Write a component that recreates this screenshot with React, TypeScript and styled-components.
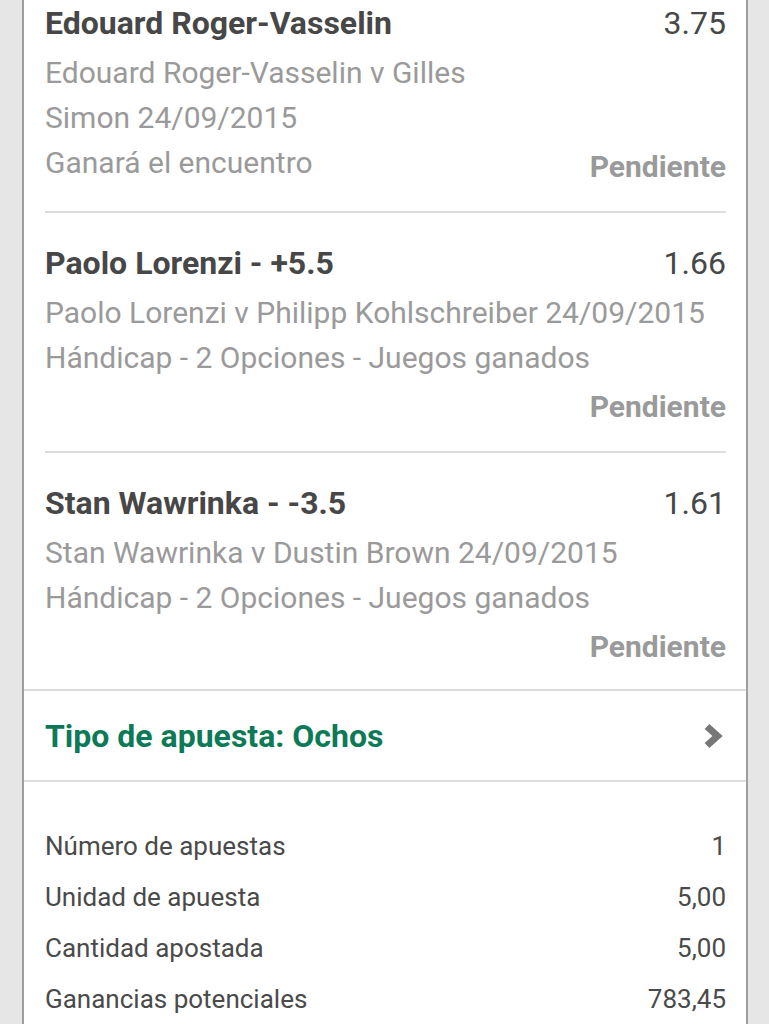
import React from 'react';
import styled, { createGlobalStyle } from 'styled-components';

const GlobalStyle = createGlobalStyle`
  html, body {
    margin: 0;
    padding: 0;
    background: #e6e6e6;
    font-family: Roboto, "Noto Sans", Arial, sans-serif;
  }
  #root {
    height: 1024px;
    overflow: hidden;
  }
`;

const Card = styled.div`
  margin: -27px 0 0 22px;
  width: 722px;
  background: #ffffff;
  border-left: 2px solid #9e9e9e;
  border-right: 2px solid #9e9e9e;
`;

const Selections = styled.div`
  padding: 0 20px 0 21px;
`;

const Selection = styled.div<{ last?: boolean }>`
  padding: 27px 0 ${p => (p.last ? '24px' : '26px')};
  border-bottom: ${p => (p.last ? 'none' : '2px solid #dcdcdc')};
`;

const TitleRow = styled.div`
  display: flex;
  justify-content: space-between;
  align-items: center;
  height: 45px;
  margin-bottom: 5px;
`;

const Title = styled.div`
  font-size: 32px;
  font-weight: 700;
  color: #474747;
`;

const Odds = styled.div`
  font-size: 32px;
  font-weight: 400;
  color: #474747;
`;

const Meta = styled.div`
  font-size: 30px;
  line-height: 45px;
  color: #9a9a9a;
`;

const StatusRow = styled.div`
  display: flex;
  justify-content: space-between;
  align-items: flex-start;
  height: 45px;
`;

const Status = styled.span`
  font-size: 30px;
  font-weight: 700;
  color: #9a9a9a;
  line-height: 45px;
  padding-top: 4px;
`;

const TypeRow = styled.div`
  display: flex;
  align-items: center;
  justify-content: space-between;
  height: 89px;
  padding: 0 22px 0 21px;
  border-top: 2px solid #dcdcdc;
  border-bottom: 2px solid #dcdcdc;
`;

const TypeLabel = styled.div`
  font-size: 32px;
  font-weight: 700;
  color: #0c7a56;
`;

const Summary = styled.div`
  padding: 38px 20px 0 21px;
`;

const SummaryRow = styled.div`
  display: flex;
  justify-content: space-between;
  align-items: center;
  height: 51px;
  font-size: 26px;
  color: #4a4a4a;
`;

type Bet = {
  title: string;
  odds: string;
  lines: string[];
  inlineStatus?: boolean;
};

const bets: Bet[] = [
  {
    title: 'Edouard Roger-Vasselin',
    odds: '3.75',
    lines: ['Edouard Roger-Vasselin v Gilles', 'Simon 24/09/2015', 'Ganará el encuentro'],
    inlineStatus: true,
  },
  {
    title: 'Paolo Lorenzi - +5.5',
    odds: '1.66',
    lines: ['Paolo Lorenzi v Philipp Kohlschreiber 24/09/2015', 'Hándicap - 2 Opciones - Juegos ganados'],
  },
  {
    title: 'Stan Wawrinka - -3.5',
    odds: '1.61',
    lines: ['Stan Wawrinka v Dustin Brown 24/09/2015', 'Hándicap - 2 Opciones - Juegos ganados'],
  },
];

const summary = [
  ['Número de apuestas', '1'],
  ['Unidad de apuesta', '5,00'],
  ['Cantidad apostada', '5,00'],
  ['Ganancias potenciales', '783,45'],
];

const Chevron = () => (
  <svg width="22" height="26" viewBox="0 0 22 26">
    <path d="M5 3.5 L15.5 13 L5 22.5" fill="none" stroke="#777777" strokeWidth="7" strokeLinejoin="miter" />
  </svg>
);

export default function App() {
  return (
    <>
      <GlobalStyle />
      <Card>
        <Selections>
          {bets.map((b, i) => {
            const head = b.inlineStatus ? b.lines.slice(0, -1) : b.lines;
            const tail = b.inlineStatus ? b.lines[b.lines.length - 1] : '';
            return (
              <Selection key={b.title} last={i === bets.length - 1}>
                <TitleRow>
                  <Title>{b.title}</Title>
                  <Odds>{b.odds}</Odds>
                </TitleRow>
                {head.map(l => (
                  <Meta key={l}>{l}</Meta>
                ))}
                <StatusRow>
                  <Meta>{tail}</Meta>
                  <Status>Pendiente</Status>
                </StatusRow>
              </Selection>
            );
          })}
        </Selections>
        <TypeRow>
          <TypeLabel>Tipo de apuesta: Ochos</TypeLabel>
          <Chevron />
        </TypeRow>
        <Summary>
          {summary.map(([k, v]) => (
            <SummaryRow key={k}>
              <span>{k}</span>
              <span>{v}</span>
            </SummaryRow>
          ))}
        </Summary>
      </Card>
    </>
  );
}
